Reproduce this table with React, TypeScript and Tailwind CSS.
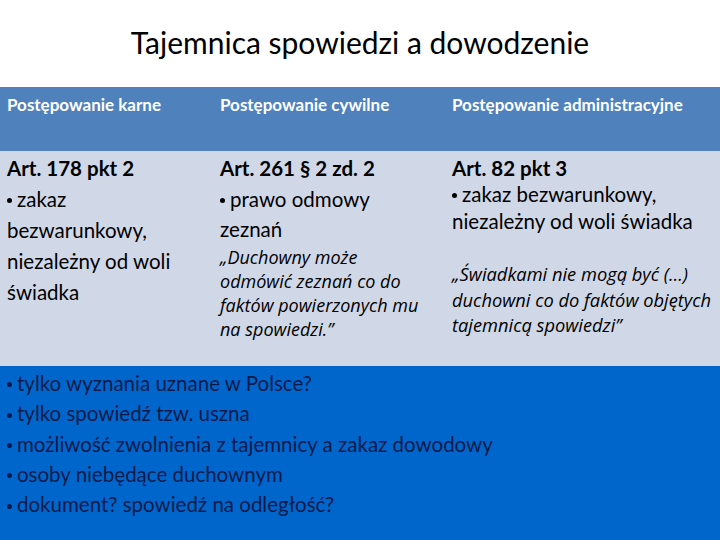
function Dot() {
  return <span className="inline-block w-[5px] h-[5px] rounded-full bg-current align-middle mr-[5px] mb-[2px]" />;
}

export default function App() {
  const font = { fontFamily: "Lato, 'Open Sans', sans-serif" };
  const italic = { fontFamily: "'Open Sans', Lato, sans-serif" };
  const bullets = [
    "tylko wyznania uznane w Polsce?",
    "tylko spowiedź tzw. uszna",
    "możliwość zwolnienia z tajemnicy a zakaz dowodowy",
    "osoby niebędące duchownym",
    "dokument? spowiedź na odległość?",
  ];

  return (
    <div className="w-[720px] h-[540px] bg-white flex flex-col overflow-hidden" style={font}>
      {/* title */}
      <div className="h-[87px] flex items-center justify-center pb-[2px]">
        <h1 className="text-[30px] text-black">Tajemnica spowiedzi a dowodzenie</h1>
      </div>

      {/* table */}
      <div className="grid grid-cols-[213px_232px_1fr]">
        <div className="bg-[#4f81bd] h-[64px] px-[7px] pt-[5px] text-white font-bold text-[17px]">Postępowanie karne</div>
        <div className="bg-[#4f81bd] h-[64px] px-[7px] pt-[5px] text-white font-bold text-[17px]">Postępowanie cywilne</div>
        <div className="bg-[#4f81bd] h-[64px] px-[7px] pt-[5px] text-white font-bold text-[17px]">Postępowanie administracyjne</div>

        <div className="bg-[#d0d8e8] h-[215px] px-[7px] pt-[2px] text-black text-[20.5px] leading-[31px]">
          <div className="font-bold">Art. 178 pkt 2</div>
          <div><Dot />zakaz</div>
          <div>bezwarunkowy,</div>
          <div>niezależny od woli</div>
          <div>świadka</div>
        </div>
        <div className="bg-[#d0d8e8] h-[215px] px-[7px] pt-[2px] text-black">
          <div className="text-[20.5px] leading-[31px] font-bold">Art. 261 § 2 zd. 2</div>
          <div className="text-[20.5px] leading-[30px]"><Dot />prawo odmowy</div>
          <div className="text-[20.5px] leading-[30px]">zeznań</div>
          <div className="italic text-[18px] leading-[24px] mt-[1px]" style={italic}>
            „Duchowny może<br />odmówić zeznań co do<br />faktów powierzonych mu<br />na spowiedzi.”
          </div>
        </div>
        <div className="bg-[#d0d8e8] h-[215px] px-[7px] pt-[4px] text-black">
          <div className="text-[20.5px] leading-[26px] font-bold">Art. 82 pkt 3</div>
          <div className="text-[20.5px] leading-[26.5px]">
            <Dot />zakaz bezwarunkowy,<br />niezależny od woli świadka
          </div>
          <div className="italic text-[18.3px] leading-[25.5px] mt-[27px]" style={italic}>
            „Świadkami nie mogą być (…)<br />duchowni co do faktów objętych<br />tajemnicą spowiedzi”
          </div>
        </div>
      </div>

      {/* bottom */}
      <div className="flex-1 bg-[#0066cc] px-[7px] pt-[2px] text-[#0b1a4a] text-[20.5px] leading-[30.3px]">
        {bullets.map((b, i) => (
          <div key={i}>
            <Dot />{b}
          </div>
        ))}
      </div>
    </div>
  );
}
